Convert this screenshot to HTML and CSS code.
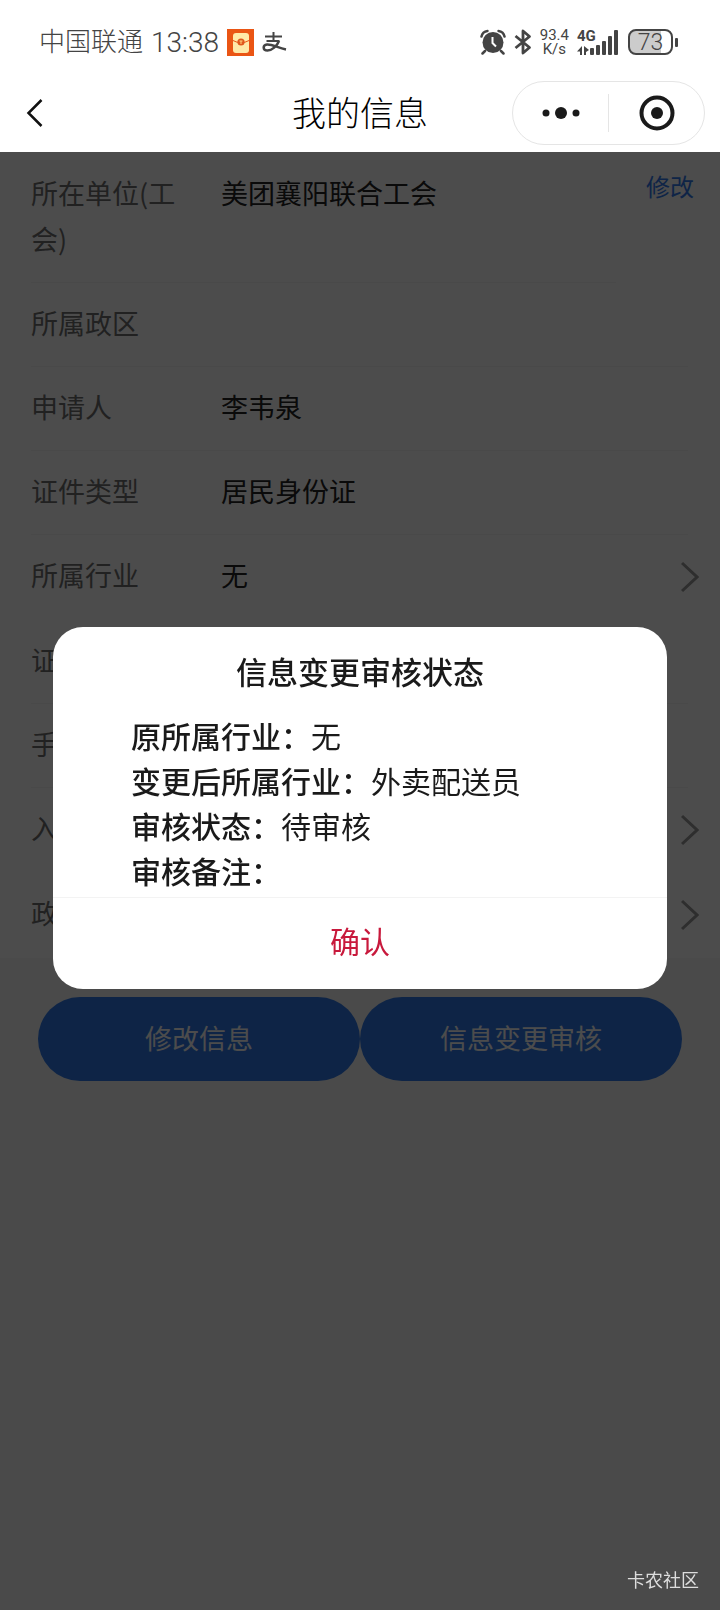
FILE: index.html
```
<!DOCTYPE html>
<html lang="zh-CN">
<head>
    <meta charset="UTF-8">
    <meta name="viewport" content="width=device-width, initial-scale=1.0">
    <title>我的信息</title>
    <link rel="stylesheet" href="styles.css">
</head>
<body>
    <header class="header">
        <div class="status-bar">
            <div class="status-left">
                <span class="carrier">中国联通</span>
                <span class="time">13:38</span>
                <svg width="27" height="27" viewBox="0 0 27 27">
                    <rect width="27" height="27" fill="#ea5514"/>
                    <rect x="6" y="4" width="16" height="20" rx="3" fill="#ffe9a8"/>
                    <path d="M6 11.500Q14 16 22 11.500" fill="none" stroke="#ea5514" stroke-width="1"/>
                    <circle cx="14" cy="13" r="3.600" fill="#e0571c"/>
                    <path d="M12.500 12h3M14 12v3" stroke="#ffd27a" stroke-width="1"/>
                </svg>
                <svg width="25" height="22" viewBox="0 0 25 22" fill="none" stroke="#444">
                    <path d="M3 5.500H20M11.500 1V10M4.500 10H17.500" stroke-width="2"/>
                    <path d="M17 10C15 15 10 19.500 5.500 19.500C.5 19.500 .5 14 5 13.500C10 13 16 17 24 18.500" stroke-width="2.500"/>
                </svg>
            </div>
            <div class="status-right">
                <svg width="26" height="26" viewBox="0 0 26 26">
                    <circle cx="13" cy="13.500" r="10.500" fill="#444"/>
                    <path d="M1.500 7.500Q2.500 2.500 7.500 2M18.500 2Q23.500 2.500 24.500 7.500M5 22L2.500 24.500M21 22L23.500 24.500" fill="none" stroke="#444" stroke-width="2.500" stroke-linecap="round"/>
                    <path d="M12.500 8V14L16 17.500" fill="none" stroke="#fff" stroke-width="2"/>
                </svg>
                <svg width="18" height="26" viewBox="0 0 18 26" fill="none" stroke="#444" stroke-width="2.800" stroke-linejoin="round">
                    <path d="M1.500 7L15.500 18.500L9 24V2L15.500 7.500L1.500 19"/>
                </svg>
                <div class="speed">93.4<br>K/s</div>
                <div class="signal">
                    <span class="network">4G</span>
                    <svg width="43" height="27" viewBox="0 0 43 27" fill="#444">
                        <path d="M5 17V26H3V22.500H0ZM7 17V26H9V23L12 21Z"/>
                        <rect x="13" y="19" width="4" height="7" rx="1"/>
                        <rect x="19" y="16" width="4" height="10" rx="1"/>
                        <rect x="25" y="12" width="4" height="14" rx="1"/>
                        <rect x="31" y="7" width="4" height="19" rx="1"/>
                        <rect x="37" y="1" width="4" height="25" rx="1"/>
                    </svg>
                </div>
                <div class="battery"><span class="battery-level">73</span></div>
            </div>
        </div>
        <nav class="nav-bar">
            <button class="back" type="button" aria-label="返回">
                <svg width="18" height="30" viewBox="0 0 18 30" fill="none" stroke="#111" stroke-width="2.500">
                    <path d="M15.500 2L2.500 15L15.500 28"/>
                </svg>
            </button>
            <h1>我的信息</h1>
            <div class="capsule">
                <button type="button" aria-label="更多">
                    <svg width="40" height="14" viewBox="0 0 40 14" fill="#1a1a1a">
                        <circle cx="5" cy="7" r="3.500"/>
                        <circle cx="20" cy="7" r="6"/>
                        <circle cx="35" cy="7" r="3.500"/>
                    </svg>
                </button>
                <button type="button" aria-label="关闭">
                    <svg width="36" height="36" viewBox="0 0 36 36">
                        <circle cx="18" cy="18" r="15.500" fill="none" stroke="#1a1a1a" stroke-width="4"/>
                        <circle cx="18" cy="18" r="6" fill="#1a1a1a"/>
                    </svg>
                </button>
            </div>
        </nav>
    </header>

    <main>
        <section class="info">
            <div class="unit">
                <div class="row">
                    <span class="label">所在单位(工会)</span>
                    <span class="value">美团襄阳联合工会</span>
                </div>
                <a class="edit" href="#">修改</a>
            </div>
            <div class="row"><span class="label">所属政区</span><span class="value"></span></div>
            <div class="row"><span class="label">申请人</span><span class="value">李韦泉</span></div>
            <div class="row"><span class="label">证件类型</span><span class="value">居民身份证</span></div>
            <div class="row link">
                <span class="label">所属行业</span><span class="value">无</span>
                <svg class="arrow" width="18" height="32" viewBox="0 0 18 32"><path d="M1 2L16 16L1 30"/></svg>
            </div>
            <div class="row"><span class="label">证</span></div>
            <div class="row"><span class="label">手</span></div>
            <div class="row link">
                <span class="label">入</span><span class="value"></span>
                <svg class="arrow" width="18" height="32" viewBox="0 0 18 32"><path d="M1 2L16 16L1 30"/></svg>
            </div>
            <div class="row link">
                <span class="label">政</span><span class="value"></span>
                <svg class="arrow" width="18" height="32" viewBox="0 0 18 32"><path d="M1 2L16 16L1 30"/></svg>
            </div>
        </section>
        <div class="actions">
            <button type="button">修改信息</button>
            <button type="button">信息变更审核</button>
        </div>
    </main>

    <div class="mask">
        <div class="modal" role="dialog" aria-labelledby="modal-title">
            <h2 id="modal-title">信息变更审核状态</h2>
            <div class="modal-body">
                <p><strong>原所属行业：</strong>无</p>
                <p><strong>变更后所属行业：</strong>外卖配送员</p>
                <p><strong>审核状态：</strong>待审核</p>
                <p><strong>审核备注：</strong></p>
            </div>
            <button class="confirm" type="button">确认</button>
        </div>
    </div>
    <div class="watermark">卡农社区</div>
</body>
</html>
```

FILE: styles.css
```
* {
    box-sizing: border-box;
}
body {
    margin: 0;
    min-height: 100vh;
    background-color: #f7f7f7;
    font-family: "Noto Sans CJK SC", sans-serif;
    font-size: 27px;
    color: #1a1a1a;
}
button {
    padding: 0;
    border: none;
    background: none;
    font-family: inherit;
    cursor: pointer;
}
svg {
    display: block;
}
h1, h2, p {
    margin: 0;
}

/* 顶部 */
.header {
    position: relative;
    z-index: 2;
    height: 152px;
    background-color: #fff;
}
.status-bar {
    display: flex;
    justify-content: space-between;
    align-items: center;
    height: 80px;
    padding: 4px 42px 0 39px;
    font-family: Roboto, "Noto Sans CJK SC", sans-serif;
    color: #444;
}
.status-left, .status-right {
    display: flex;
    align-items: center;
}
.status-left {
    gap: 8px;
}
.status-right {
    gap: 8px;
}
.carrier {
    font-size: 26px;
    font-weight: 300;
    line-height: 30px;
}
.time {
    font-size: 28px;
    font-weight: 300;
}
.speed {
    font-size: 15px;
    line-height: 14px;
    text-align: center;
}
.signal {
    position: relative;
}
.network {
    position: absolute;
    top: 0;
    left: 0;
    font-size: 15px;
    font-weight: 700;
    line-height: 14px;
}
.battery {
    display: flex;
    align-items: center;
}
.battery-level {
    width: 45px;
    height: 26px;
    border: 2px solid #444;
    border-radius: 8px;
    background: linear-gradient(to right, #ccc 75%, #fff 75%);
    font-size: 23px;
    font-weight: 300;
    line-height: 23px;
    text-align: center;
}
.battery::after {
    content: "";
    width: 3px;
    height: 9px;
    margin-left: 2px;
    border-radius: 1px;
    background-color: #444;
}
.nav-bar {
    display: grid;
    grid-template-columns: 1fr auto 1fr;
    align-items: center;
    height: 66px;
    padding: 0 15px;
}
.back {
    justify-self: start;
    padding: 0 11px;
}
.nav-bar h1 {
    padding-bottom: 2px;
    font-size: 34px;
    font-weight: 300;
    line-height: 48px;
    color: #000;
}
.capsule {
    display: flex;
    align-items: center;
    justify-self: end;
    width: 193px;
    height: 64px;
    border: 1px solid #e5e5e5;
    border-radius: 32px;
}
.capsule button {
    display: flex;
    flex: 1;
    align-items: center;
    justify-content: center;
    height: 38px;
}
.capsule button + button {
    border-left: 1px solid #e5e5e5;
}

/* 信息列表 */
.info {
    padding-top: 1px;
    background-color: #fff;
}
.unit {
    display: flex;
    align-items: flex-start;
    justify-content: space-between;
}
.unit .row {
    flex: 1;
    margin-right: 30px;
}
.edit {
    margin-right: 26px;
    padding-top: 10px;
    font-size: 24px;
    line-height: 46px;
    color: #327bed;
    text-decoration: none;
}
.row {
    display: flex;
    gap: 30px;
    min-height: 84px;
    margin: 0 32px 0 31px;
    padding: 17px 0 20px;
    border-bottom: 1px solid #f3f3f3;
    line-height: 46px;
}
.label {
    flex: none;
    width: 160px;
    color: #707070;
}
.value {
    flex: 1;
    color: #222;
}
.link {
    height: 85px;
    margin-right: 21px;
    border-bottom: none;
}
.arrow {
    margin-top: 9px;
    fill: none;
    stroke: #999;
    stroke-width: 3;
}
.actions {
    display: flex;
    padding: 39px 38px;
}
.actions button {
    flex: 1;
    height: 84px;
    padding-bottom: 4px;
    border-radius: 42px;
    background-color: #2f7aea;
    font-size: 27px;
    color: #fff;
}

/* 弹窗 */
.mask {
    position: fixed;
    inset: 0;
    z-index: 1;
    display: flex;
    align-items: center;
    padding: 6px 53px 0;
    background-color: rgba(0, 0, 0, 0.7);
}
.modal {
    width: 100%;
    border-radius: 30px;
    background-color: #fff;
    overflow: hidden;
}
.modal h2 {
    padding-top: 22px;
    font-size: 31px;
    font-weight: 500;
    line-height: 44px;
    text-align: center;
}
.modal-body {
    padding: 20px 78px 4px;
    font-size: 30px;
    line-height: 45px;
}
.modal-body strong {
    font-weight: 500;
}
.confirm {
    width: 100%;
    height: 92px;
    padding-bottom: 8px;
    border-top: 1px solid #f3f3f3;
    font-size: 30px;
    color: #c8193c;
}
.watermark {
    position: fixed;
    right: 21px;
    bottom: 18px;
    z-index: 3;
    font-size: 18px;
    color: #ddd;
}
```
